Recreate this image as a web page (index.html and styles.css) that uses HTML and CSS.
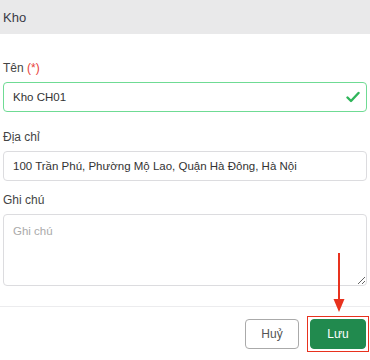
FILE: index.html
```html
<!DOCTYPE html>
<html lang="vi">
  <head>
    <meta charset="UTF-8" />
    <meta name="viewport" content="width=device-width, initial-scale=1.0" />
    <title>Kho</title>
    <link rel="stylesheet" href="styles.css">
  </head>
  <body>
    <div class="modal-header">Kho</div>

    <div class="modal-body">
      <div class="form-group group-name">
        <label>Tên <span class="required">(*)</span></label>
        <div class="input-wrap">
          <input type="text" class="form-control is-valid" value="Kho CH01" />
          <svg class="valid-icon" width="14" height="12" viewBox="0 0 14 12">
            <path d="M1.5 6.5 L5 10 L12.5 2" fill="none" stroke="#2fb55a" stroke-width="2.4" stroke-linecap="round" stroke-linejoin="round" />
          </svg>
        </div>
      </div>

      <div class="form-group">
        <label>Địa chỉ</label>
        <input type="text" class="form-control" value="100 Trần Phú, Phường Mộ Lao, Quận Hà Đông, Hà Nội" />
      </div>

      <div class="form-group">
        <label>Ghi chú</label>
        <textarea class="form-control note" placeholder="Ghi chú"></textarea>
      </div>
    </div>

    <div class="modal-footer">
      <button class="btn btn-cancel">Huỷ</button>
      <div class="highlight">
        <button class="btn btn-save">Lưu</button>
        <!-- red arrow pointing at the save button -->
        <svg class="arrow" width="14" height="60" viewBox="0 0 14 60">
          <line x1="7" y1="0" x2="7" y2="48" stroke="#e8321e" stroke-width="2" />
          <path d="M1.5 46 L7 59 L12.5 46 Z" fill="#e8321e" />
        </svg>
      </div>
    </div>
  </body>
</html>
```

FILE: styles.css
```css
body {
  font-family: 'Liberation Sans', Arial, sans-serif;
  background-color: #fff;
  margin: 0;
  padding: 0;
  color: #333;
}

.modal-header {
  height: 34px;
  background-color: #e9e9ea;
  display: flex;
  align-items: center;
  padding: 0 3px;
  font-size: 13px;
  color: #3a3a45;
}

.modal-body {
  padding: 26px 3px 0;
}

.form-group {
  margin-bottom: 11px;
}

.form-group.group-name {
  margin-bottom: 17px;
}

.form-group label {
  display: block;
  font-size: 12px;
  line-height: 16px;
  color: #444;
  margin-bottom: 6px;
}

.required {
  color: #e8423a;
}

.input-wrap {
  position: relative;
}

.form-control {
  display: block;
  box-sizing: border-box;
  width: 100%;
  height: 30px;
  padding: 0 9px;
  font-family: inherit;
  font-size: 11.5px;
  color: #333;
  border: 1px solid #dcdcdf;
  border-radius: 4px;
  background-color: #fff;
  outline: none;
}

.form-control.is-valid {
  border-color: #6fdb94;
  padding-right: 30px;
}

.valid-icon {
  position: absolute;
  right: 7px;
  top: 9px;
}

.note {
  height: 72px;
  padding: 10px 9px;
  resize: vertical;
}

.note::placeholder {
  color: #aaa;
}

.modal-footer {
  margin-top: 20px;
  border-top: 1px solid #ececee;
  display: flex;
  justify-content: flex-end;
  align-items: center;
  gap: 8px;
  padding: 9px 1px 0;
}

.btn {
  height: 30px;
  border-radius: 4px;
  font-family: inherit;
  font-size: 12px;
  cursor: pointer;
}

.btn-cancel {
  width: 54px;
  background-color: #fff;
  border: 1px solid #aaa;
  color: #555;
}

.highlight {
  position: relative;
  border: 1px solid #e8321e;
  padding: 2px;
}

.btn-save {
  display: block;
  width: 56px;
  background-color: #218a4e;
  border: 1px solid #218a4e;
  color: #fff;
}

.arrow {
  position: absolute;
  left: 24px;
  bottom: 38px;
}
```
